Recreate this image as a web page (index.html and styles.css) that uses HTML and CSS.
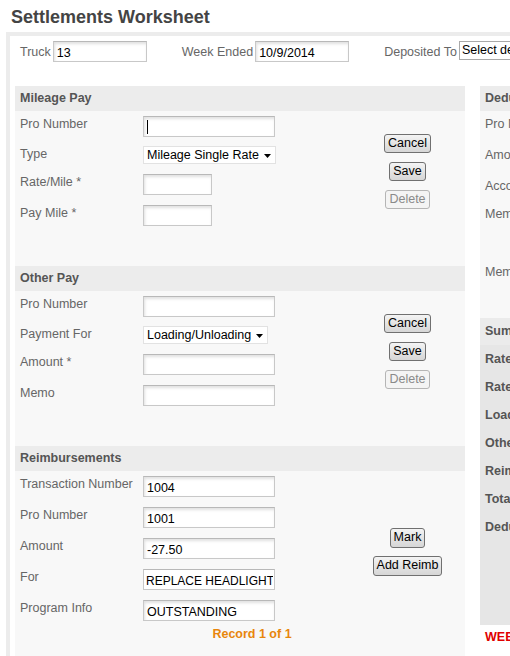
FILE: index.html
```html
<!DOCTYPE html>
<html>
<head>
<meta charset="utf-8">
<title>Settlements Worksheet</title>
<link rel="stylesheet" href="styles.css">
</head>
<body>
<div class="page">
  <h1 class="title">Settlements Worksheet</h1>
  <div class="sheet">
    <div class="topbar">
      <label class="top-label">Truck</label>
      <input class="inp top-inp" type="text" value="13">
      <label class="top-label gap">Week Ended</label>
      <input class="inp top-inp" type="text" value="10/9/2014">
      <label class="top-label gap">Deposited To</label>
      <span class="top-select">Select deposit account</span>
    </div>

    <div class="columns">
      <div class="left-col">
        <div class="section">
          <div class="sec-head">Mileage Pay</div>
          <div class="sec-body">
            <div class="fields">
              <div class="row"><span class="lbl">Pro Number</span><span class="focus-wrap"><input class="inp wide" type="text"><span class="caret"></span></span></div>
              <div class="row row-sel"><span class="lbl">Type</span><span class="sel-wrap"><select class="sel sel-wide"><option>Mileage Single Rate</option></select><svg class="arrow" width="7" height="4" viewBox="0 0 7 4"><path d="M0 0H7L3.5 4Z" fill="#000"/></svg></span></div>
              <div class="row"><span class="lbl">Rate/Mile *</span><input class="inp short" type="text"></div>
              <div class="row"><span class="lbl">Pay Mile *</span><input class="inp short" type="text"></div>
            </div>
            <div class="buttons">
              <button class="btn">Cancel</button>
              <button class="btn">Save</button>
              <button class="btn" disabled>Delete</button>
            </div>
          </div>
        </div>

        <div class="section">
          <div class="sec-head">Other Pay</div>
          <div class="sec-body">
            <div class="fields">
              <div class="row"><span class="lbl">Pro Number</span><input class="inp wide" type="text"></div>
              <div class="row row-sel"><span class="lbl">Payment For</span><span class="sel-wrap"><select class="sel sel-mid"><option>Loading/Unloading</option></select><svg class="arrow" width="7" height="4" viewBox="0 0 7 4"><path d="M0 0H7L3.5 4Z" fill="#000"/></svg></span></div>
              <div class="row"><span class="lbl">Amount *</span><input class="inp wide" type="text"></div>
              <div class="row"><span class="lbl">Memo</span><input class="inp wide" type="text"></div>
            </div>
            <div class="buttons">
              <button class="btn">Cancel</button>
              <button class="btn">Save</button>
              <button class="btn" disabled>Delete</button>
            </div>
          </div>
        </div>

        <div class="section">
          <div class="sec-head">Reimbursements</div>
          <div class="sec-body reimb">
            <div class="fields">
              <div class="row"><span class="lbl">Transaction Number</span><input class="inp wide" type="text" value="1004"></div>
              <div class="row"><span class="lbl">Pro Number</span><input class="inp wide" type="text" value="1001"></div>
              <div class="row"><span class="lbl">Amount</span><input class="inp wide" type="text" value="-27.50"></div>
              <div class="row"><span class="lbl">For</span><input class="inp wide plain" type="text" value="REPLACE HEADLIGHT"></div>
              <div class="row"><span class="lbl">Program Info</span><input class="inp wide" type="text" value="OUTSTANDING"></div>
            </div>
            <div class="buttons buttons-tight">
              <button class="btn">Mark</button>
              <button class="btn">Add Reimb</button>
            </div>
          </div>
          <div class="record">Record 1 of 1</div>
        </div>
      </div>

      <div class="right-col">
        <div class="ded">
          <div class="sec-head">Deductions</div>
          <div class="ded-body">
            <div class="ded-row r31">Pro Number</div>
            <div class="ded-row r31">Amount *</div>
            <div class="ded-row r28">Account</div>
            <div class="ded-row r58">Memo</div>
            <div class="ded-row">Memo 2</div>
          </div>
        </div>
        <div class="summary">
          <div class="sum-head">Summary</div>
          <div class="sum-body">
            <div class="sum-row">Rate/Mile Pay</div>
            <div class="sum-row">Rate Pay</div>
            <div class="sum-row">Loading/Unloading</div>
            <div class="sum-row">Other Pay</div>
            <div class="sum-row">Reimbursements</div>
            <div class="sum-row">Total Pay</div>
            <div class="sum-row">Deductions</div>
          </div>
        </div>
        <div class="weekly">WEEKLY NET PAY</div>
      </div>
    </div>
  </div>
</div>
</body>
</html>
```

FILE: styles.css
```css
html, body {
  margin: 0;
  padding: 0;
  width: 510px;
  height: 656px;
  overflow: hidden;
  background: #fff;
}

body {
  font-family: "Liberation Sans", Arial, sans-serif;
  font-size: 12.5px;
  color: #666;
}

.page {
  width: 720px;
  padding-left: 6px;
}

.title {
  margin: 0 0 4px 0;
  padding: 6px 0 0 5px;
  font-size: 18px;
  line-height: 22px;
  font-weight: bold;
  color: #444;
}

.sheet {
  border-top: 4px solid #ececec;
  border-left: 4px solid #ececec;
  padding: 5px 0 0 5px;
}

.topbar {
  display: flex;
  align-items: center;
  height: 21px;
  padding-left: 5px;
}

.top-label {
  font-size: 12.5px;
  color: #666;
  margin-right: 2px;
  white-space: nowrap;
}

.top-label.gap {
  margin-left: 35px;
}

.inp {
  box-sizing: border-box;
  height: 21px;
  border: 1px solid #c8c8c8;
  border-top-color: #b8b8b8;
  background: #fff;
  box-shadow: inset 1px 2px 3px rgba(0, 0, 0, 0.12);
  font-family: "Liberation Sans", Arial, sans-serif;
  font-size: 12.5px;
  color: #000;
  padding: 2px 2px 0 3px;
  margin: 0;
  outline: none;
}

.inp.plain {
  box-shadow: none;
  font-size: 12px;
  padding-left: 2px;
  padding-right: 1px;
}

.top-inp {
  width: 94px;
  flex: none;
}

.top-select {
  box-sizing: border-box;
  flex: none;
  height: 19px;
  width: 140px;
  border: 1px solid #a9a9a9;
  background: #fff;
  font-size: 12.5px;
  line-height: 17px;
  color: #000;
  padding: 0 2px;
  white-space: nowrap;
  overflow: hidden;
  margin-top: -2px;
}

.columns {
  display: flex;
  gap: 15px;
  margin-top: 24px;
}

.left-col {
  width: 450px;
  flex: none;
  background: #f8f8f8;
}

.right-col {
  width: 220px;
  flex: none;
}

.sec-head {
  height: 25px;
  line-height: 25px;
  background: #ececec;
  padding-left: 5px;
  font-weight: bold;
  color: #555;
  white-space: nowrap;
}

.sec-body {
  display: flex;
  padding: 5px 0 40px 5px;
}

.sec-body.reimb {
  padding-bottom: 0;
}

.fields {
  width: 330px;
  flex: none;
  display: flex;
  flex-direction: column;
}

.row {
  display: flex;
  align-items: flex-start;
  height: 21px;
  margin-bottom: 10px;
}

.row:last-child {
  margin-bottom: 0;
}

.row-sel {
  height: 18px;
  margin-top: -1px;
}

.lbl {
  width: 123px;
  flex: none;
  line-height: 15px;
  padding-top: 1px;
  color: #666;
}

.wide {
  width: 132px;
}

.short {
  width: 69px;
}

.focus-wrap {
  position: relative;
  display: block;
  height: 21px;
}

.caret {
  position: absolute;
  left: 4px;
  top: 4px;
  width: 1px;
  height: 14px;
  background: #000;
}

.sel-wrap {
  position: relative;
  display: block;
  height: 18px;
}

.sel {
  box-sizing: border-box;
  height: 18px;
  border: 1px solid #e2e2e2;
  background: #fff;
  font-family: "Liberation Sans", Arial, sans-serif;
  font-size: 12.5px;
  color: #000;
  padding: 0 0 0 3px;
  margin: 0;
  -webkit-appearance: none;
  appearance: none;
  outline: none;
}

.sel-wide {
  width: 133px;
}

.sel-mid {
  width: 125px;
}

.arrow {
  position: absolute;
  right: 5px;
  top: 8px;
}

.buttons {
  flex: 1;
  display: flex;
  flex-direction: column;
  align-items: center;
  justify-content: center;
  gap: 9px;
}

.buttons-tight {
  gap: 8px;
  padding-top: 6px;
}

.btn {
  height: 19px;
  padding: 0 3px;
  margin: 0;
  border: 1px solid #707070;
  border-radius: 3px;
  background: linear-gradient(#f4f4f4, #e4e4e4 50%, #d6d6d6);
  font-family: "Liberation Sans", Arial, sans-serif;
  font-size: 12.5px;
  line-height: 17px;
  color: #000;
}

.buttons-tight .btn {
  height: 20px;
}

.btn:disabled {
  border-color: #b5b5b5;
  background: #f4f4f4;
  color: #8a8a8a;
}

.record {
  padding: 6px 0 30px 24px;
  text-align: center;
  line-height: 15px;
  font-weight: bold;
  color: #e8860c;
}

.ded-body {
  background: #f8f8f8;
  padding-top: 5px;
  height: 202px;
}

.ded-row {
  line-height: 15px;
  padding-left: 5px;
  padding-top: 1px;
  color: #666;
  white-space: nowrap;
}

.r31 {
  height: 30px;
}

.r28 {
  height: 27px;
}

.r58 {
  height: 57px;
}

.summary {
  background: #e6e6e6;
}

.sum-head {
  height: 27px;
  line-height: 27px;
  padding-left: 5px;
  background: #ebebeb;
  font-weight: bold;
  color: #555;
}

.sum-body {
  padding-bottom: 84px;
}

.sum-row {
  height: 28px;
  line-height: 28px;
  padding-left: 5px;
  font-weight: bold;
  color: #555;
  white-space: nowrap;
}

.weekly {
  margin-top: 5px;
  padding-left: 5px;
  line-height: 15px;
  font-weight: bold;
  color: #e00000;
  white-space: nowrap;
}
```
